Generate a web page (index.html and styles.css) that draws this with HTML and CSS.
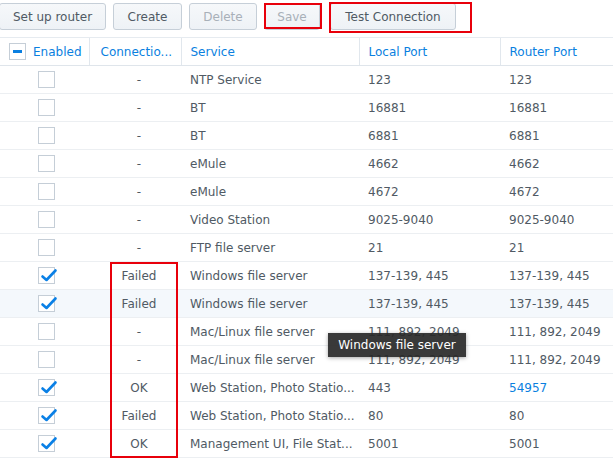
FILE: index.html
```html
<!DOCTYPE html>
<html>
<head>
<meta charset="utf-8">
<link rel="stylesheet" href="styles.css">
</head>
<body>
<div class="page">
  <div class="toolbar">
    <button class="btn w-setup">Set up router</button>
    <button class="btn w-create">Create</button>
    <button class="btn w-delete disabled">Delete</button>
    <button class="btn w-save disabled">Save</button>
    <button class="btn w-test">Test Connection</button>
  </div>
  <div class="mark mark-save"></div>
  <div class="mark mark-test"></div>
  <div class="mark mark-status"></div>

  <table class="grid">
    <colgroup>
      <col class="c1"><col class="c2"><col class="c3"><col class="c4"><col class="c5">
    </colgroup>
    <thead>
      <tr>
        <th class="th-en"><span class="cb cb-part"></span>Enabled</th>
        <th>Connectio...</th>
        <th>Service</th>
        <th>Local Port</th>
        <th>Router Port</th>
      </tr>
    </thead>
    <tbody>
      <tr><td class="en"><span class="cb"></span></td><td class="st">-</td><td>NTP Service</td><td>123</td><td>123</td></tr>
      <tr><td class="en"><span class="cb"></span></td><td class="st">-</td><td>BT</td><td>16881</td><td>16881</td></tr>
      <tr><td class="en"><span class="cb"></span></td><td class="st">-</td><td>BT</td><td>6881</td><td>6881</td></tr>
      <tr><td class="en"><span class="cb"></span></td><td class="st">-</td><td>eMule</td><td>4662</td><td>4662</td></tr>
      <tr><td class="en"><span class="cb"></span></td><td class="st">-</td><td>eMule</td><td>4672</td><td>4672</td></tr>
      <tr><td class="en"><span class="cb"></span></td><td class="st">-</td><td>Video Station</td><td>9025-9040</td><td>9025-9040</td></tr>
      <tr><td class="en"><span class="cb"></span></td><td class="st">-</td><td>FTP file server</td><td>21</td><td>21</td></tr>
      <tr><td class="en"><span class="cb on"><svg viewBox="0 0 17 17"><path d="M2.5 9.5 L6.5 13 L15.5 3.5" /></svg></span></td><td class="st">Failed</td><td>Windows file server</td><td>137-139, 445</td><td>137-139, 445</td></tr>
      <tr class="hover"><td class="en"><span class="cb on"><svg viewBox="0 0 17 17"><path d="M2.5 9.5 L6.5 13 L15.5 3.5" /></svg></span></td><td class="st">Failed</td><td>Windows file server</td><td>137-139, 445</td><td>137-139, 445</td></tr>
      <tr><td class="en"><span class="cb"></span></td><td class="st">-</td><td>Mac/Linux file server</td><td>111, 892, 2049</td><td>111, 892, 2049</td></tr>
      <tr><td class="en"><span class="cb"></span></td><td class="st">-</td><td>Mac/Linux file server</td><td>111, 892, 2049</td><td>111, 892, 2049</td></tr>
      <tr><td class="en"><span class="cb on"><svg viewBox="0 0 17 17"><path d="M2.5 9.5 L6.5 13 L15.5 3.5" /></svg></span></td><td class="st">OK</td><td>Web Station, Photo Statio...</td><td>443</td><td class="link">54957</td></tr>
      <tr><td class="en"><span class="cb on"><svg viewBox="0 0 17 17"><path d="M2.5 9.5 L6.5 13 L15.5 3.5" /></svg></span></td><td class="st">Failed</td><td>Web Station, Photo Statio...</td><td>80</td><td>80</td></tr>
      <tr><td class="en"><span class="cb on"><svg viewBox="0 0 17 17"><path d="M2.5 9.5 L6.5 13 L15.5 3.5" /></svg></span></td><td class="st">OK</td><td>Management UI, File Stat...</td><td>5001</td><td>5001</td></tr>
    </tbody>
  </table>

  <div class="tooltip">Windows file server</div>
</div>
</body>
</html>
```

FILE: styles.css
```css
html, body {
  margin: 0;
  padding: 0;
  background: #fff;
}
.page {
  position: relative;
  width: 613px;
  height: 466px;
  overflow: hidden;
  font-family: "DejaVu Sans", Verdana, sans-serif;
  font-size: 12px;
  color: #505a64;
}
.toolbar {
  display: flex;
  gap: 7px;
  padding: 3px 0 0 0;
  height: 34px;
  box-sizing: border-box;
}
.btn {
  height: 27px;
  box-sizing: border-box;
  border: 1px solid #c6cfd8;
  border-radius: 3px;
  background: linear-gradient(#f6f8fa, #eef2f6);
  font-family: inherit;
  font-size: 12px;
  color: #505a64;
  padding: 0;
}
.btn.disabled { color: #a8b0b8; }
.w-setup { width: 107px; margin-left: -1px; }
.w-create { width: 69px; }
.w-delete { width: 68px; }
.w-save { width: 56px; }
.w-test { width: 126px; margin-left: 3px; }

.mark {
  position: absolute;
  border: 2px solid #e8000b;
  box-sizing: border-box;
}
.mark-save { left: 264px; top: 3px; width: 58px; height: 26px; }
.mark-test { left: 329px; top: 2px; width: 143px; height: 31px; }
.mark-status { left: 110px; top: 262px; width: 68px; height: 196px; }

.grid {
  border-collapse: collapse;
  table-layout: fixed;
  width: 613px;
  margin-top: 3px;
}
.c1 { width: 89px; }
.c2 { width: 92px; }
.c3 { width: 178px; }
.c4 { width: 141px; }
.c5 { width: 113px; }

.grid th {
  height: 27px;
  padding: 0 0 0 9px;
  text-align: left;
  font-weight: normal;
  color: #0a7fe0;
  border-top: 1px solid #e6ebf0;
  border-bottom: 1px solid #dfe5eb;
  border-left: 1px solid #e1e7ed;
  white-space: nowrap;
  overflow: hidden;
}
.grid th:first-child { border-left: none; }
.grid th:nth-child(2) { padding-left: 11px; }
.th-en {
  padding-left: 9px !important;
}
.th-en .cb { margin-right: 7px; vertical-align: -4px; }

.grid td {
  height: 27px;
  padding: 0 0 0 9px;
  border-bottom: 1px solid #eceff2;
  white-space: nowrap;
  overflow: hidden;
}
.grid td.en { padding: 0; text-align: center; padding-left: 3px; }
.grid td.st { padding: 0 0 0 8px; text-align: center; }
.grid tr.hover td { background: #f4f8fc; }
.grid td.link { color: #0a7fe0; }

.cb {
  display: inline-block;
  width: 17px;
  height: 17px;
  box-sizing: border-box;
  border: 1px solid #c5ced7;
  background: #fff;
  vertical-align: middle;
  position: relative;
}
.cb-part::after {
  content: "";
  position: absolute;
  left: 3px;
  top: 6px;
  width: 9px;
  height: 3px;
  background: #0a7fe0;
}
.cb svg {
  position: absolute;
  left: 1px;
  top: -1px;
  width: 17px;
  height: 17px;
  overflow: visible;
}
.cb svg path {
  fill: none;
  stroke: #0a80e6;
  stroke-width: 2.6;
  stroke-linecap: round;
  stroke-linejoin: round;
}

.tooltip {
  position: absolute;
  left: 328px;
  top: 333px;
  width: 138px;
  height: 24px;
  box-sizing: border-box;
  background: rgba(40, 40, 40, 0.92);
  color: #fff;
  font-size: 12px;
  line-height: 24px;
  text-align: center;
  box-shadow: 0 1px 4px rgba(0,0,0,0.35);
}
```
